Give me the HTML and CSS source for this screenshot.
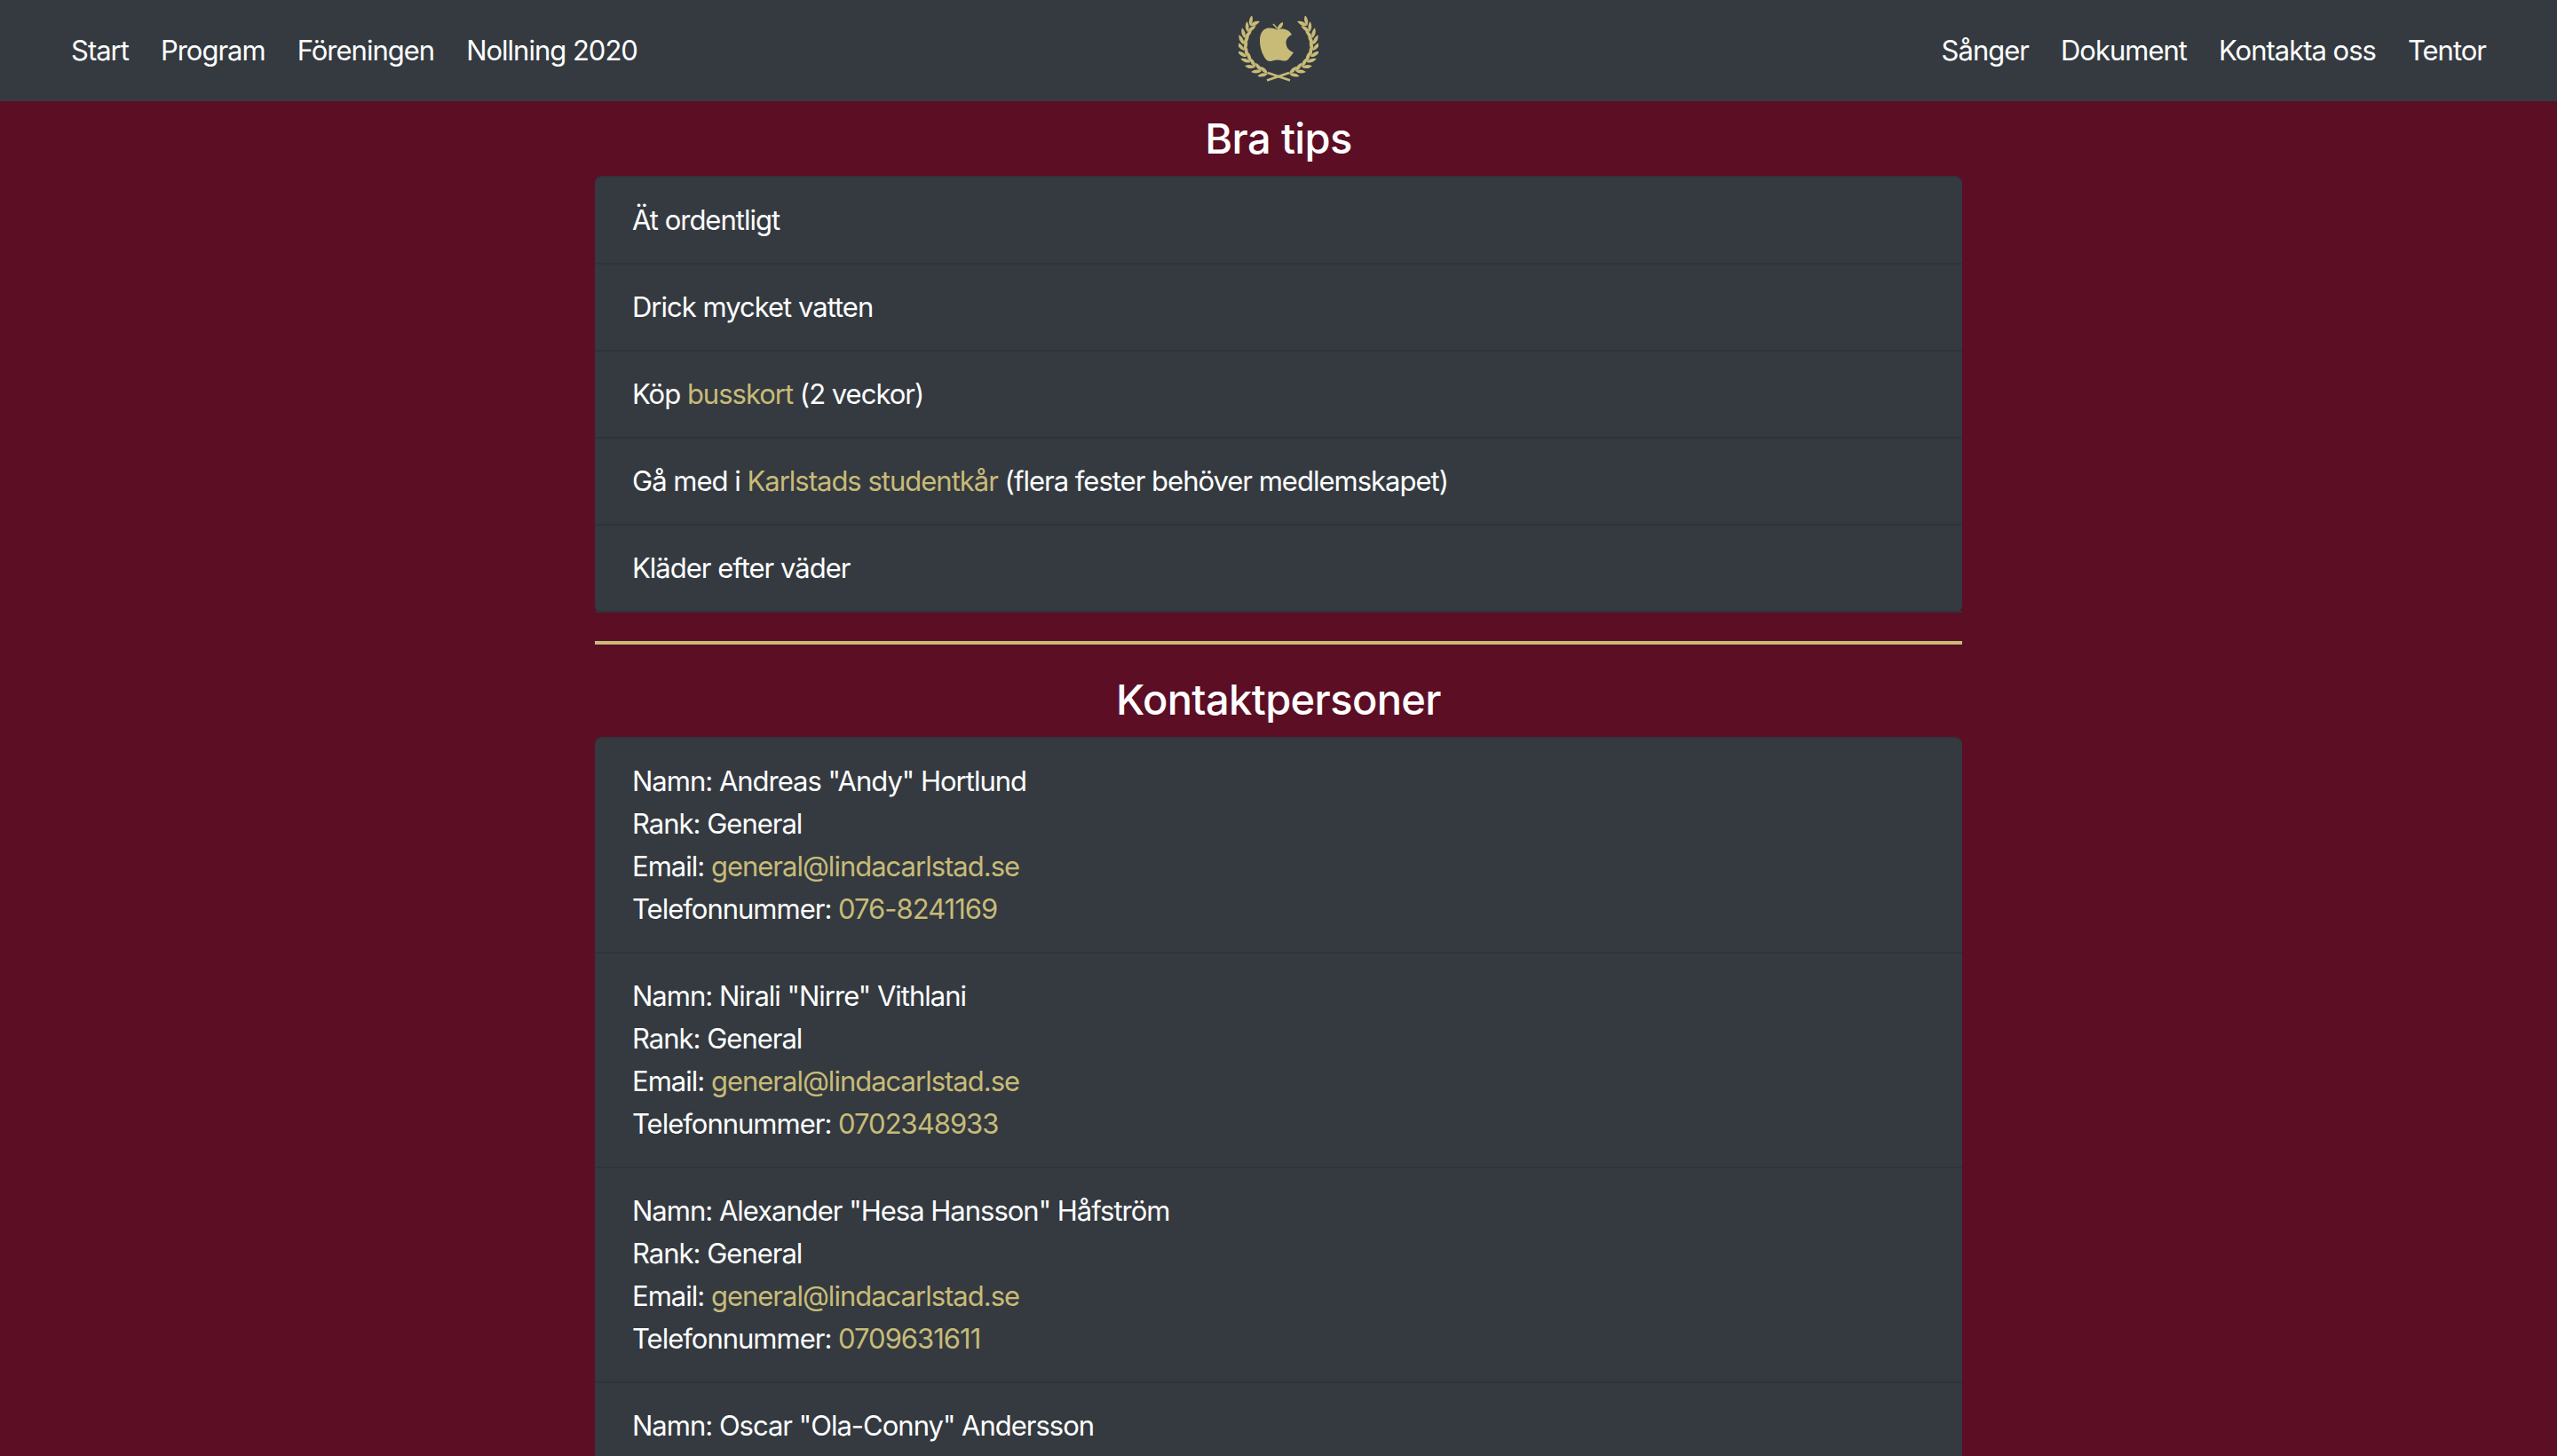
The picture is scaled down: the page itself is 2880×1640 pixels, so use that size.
FILE: index.html
```html
<!DOCTYPE html>
<html lang="sv">
<head>
    <meta charset="utf-8">
    <title>Nollning 2020</title>
    <link rel="stylesheet" href="styles.css">
</head>
<body>

<nav class="navbar">
    <div class="nav-links">
        <a href="#">Start</a>
        <a href="#">Program</a>
        <a href="#">Föreningen</a>
        <a href="#">Nollning 2020</a>
    </div>
    <a href="#" class="logo" aria-label="Logo">
        <svg width="90" height="76" viewBox="0 0 90 76">
            <defs>
                <path id="leaf" d="M0 0 Q5 -4.6 12 -1 Q6 3.4 0 0 Z"/>
                <g id="branch">
                    <use href="#leaf" transform="translate(33 65) rotate(172)"/>
                    <use href="#leaf" transform="translate(33 65) rotate(228)"/>
                    <use href="#leaf" transform="translate(26 62) rotate(180)"/>
                    <use href="#leaf" transform="translate(26 62) rotate(236)"/>
                    <use href="#leaf" transform="translate(19 57.5) rotate(190)"/>
                    <use href="#leaf" transform="translate(19 57.5) rotate(246)"/>
                    <use href="#leaf" transform="translate(13.5 52) rotate(204)"/>
                    <use href="#leaf" transform="translate(13.5 52) rotate(260)"/>
                    <use href="#leaf" transform="translate(9 46) rotate(217)"/>
                    <use href="#leaf" transform="translate(9 46) rotate(273)"/>
                    <use href="#leaf" transform="translate(6.5 39) rotate(234)"/>
                    <use href="#leaf" transform="translate(6.5 39) rotate(290)"/>
                    <use href="#leaf" transform="translate(6 32) rotate(247)"/>
                    <use href="#leaf" transform="translate(6 32) rotate(303)"/>
                    <use href="#leaf" transform="translate(7 25) rotate(260)"/>
                    <use href="#leaf" transform="translate(7 25) rotate(316)"/>
                    <use href="#leaf" transform="translate(10 18) rotate(272)"/>
                    <use href="#leaf" transform="translate(10 18) rotate(328)"/>
                    <use href="#leaf" transform="translate(13 11) rotate(284)"/>
                    <use href="#leaf" transform="translate(13 11) rotate(340)"/>
                    <path d="M33 64 L58 72.5" class="stem"/>
                </g>
            </defs>
            <use href="#branch"/>
            <use href="#branch" transform="translate(90 0) scale(-1 1)"/>
            <path d="M44 15.5 C38 13 32 12.5 28.5 15.5 C25 18.5 24 23 24 28 C24 36 27 44 31 49 C33 51.3 36 51.3 39 50.2 C42 49.2 46 49.2 49 50.2 C53 51.3 55.5 50 57 47.5 C58.5 45.5 60.5 43.5 62 41 C56.5 39 53.5 35 53.5 30 C53.5 26 56 23 60 21 C57 15.5 50 13.2 44 15.5 Z"/>
            <path d="M43.5 16 C44 11 46 8.5 50 7 C50.5 11 48 14.5 43.5 16 Z"/>
            <path d="M39 9 L43.5 14" class="twig"/>
        </svg>
    </a>
    <div class="nav-links nav-right">
        <a href="#">Sånger</a>
        <a href="#">Dokument</a>
        <a href="#">Kontakta oss</a>
        <a href="#">Tentor</a>
    </div>
</nav>

<main class="container">
    <h3>Bra tips</h3>
    <ul class="list">
        <li>Ät ordentligt</li>
        <li>Drick mycket vatten</li>
        <li>Köp <a href="#">busskort</a> (2 veckor)</li>
        <li>Gå med i <a href="#">Karlstads studentkår</a> (flera fester behöver medlemskapet)</li>
        <li>Kläder efter väder</li>
    </ul>

    <hr>

    <h3>Kontaktpersoner</h3>
    <ul class="list">
        <li>
            Namn: Andreas "Andy" Hortlund<br>
            Rank: General<br>
            Email: <a href="#">general@lindacarlstad.se</a><br>
            Telefonnummer: <a href="#">076-8241169</a>
        </li>
        <li>
            Namn: Nirali "Nirre" Vithlani<br>
            Rank: General<br>
            Email: <a href="#">general@lindacarlstad.se</a><br>
            Telefonnummer: <a href="#">0702348933</a>
        </li>
        <li>
            Namn: Alexander "Hesa Hansson" Håfström<br>
            Rank: General<br>
            Email: <a href="#">general@lindacarlstad.se</a><br>
            Telefonnummer: <a href="#">0709631611</a>
        </li>
        <li>
            Namn: Oscar "Ola-Conny" Andersson
        </li>
    </ul>
</main>

</body>
</html>
```

FILE: styles.css
```css
html, body {
    height: 100%;
    overflow: hidden;
}

body {
    margin: 0;
    background-color: #5c0e25;
    color: #fff;
    font-family: Inter, "Liberation Sans", sans-serif;
    font-size: 31px;
    letter-spacing: -1px;
    line-height: 48px;
}

a {
    color: #c8bb78;
    text-decoration: none;
}

.navbar {
    display: grid;
    grid-template-columns: 1fr auto 1fr;
    align-items: center;
    height: 114px;
    padding: 0 80px;
    background-color: #343a40;
}

.nav-links {
    display: flex;
    gap: 36px;
}

.nav-right {
    justify-content: flex-end;
}

.nav-links a {
    color: #fff;
}

.logo {
    display: flex;
    margin-bottom: 2px;
}

.logo svg {
    fill: #c8bb78;
}

.stem, .twig {
    fill: none;
    stroke: #c8bb78;
    stroke-width: 2.4;
}

.twig {
    stroke-width: 1.5;
}

.container {
    width: 1540px;
    margin: 0 auto;
}

h3 {
    margin: 0;
    padding-top: 6px;
    height: 84px;
    box-sizing: border-box;
    font-size: 47px;
    font-weight: 500;
    letter-spacing: -0.6px;
    line-height: 72px;
    text-align: center;
}

.list {
    margin: 0;
    padding: 0;
    list-style: none;
    background-color: #343a40;
    border-top: 2px solid #2f343a;
    border-radius: 8px;
}

.list li {
    padding: 24px 42px;
    border-bottom: 2px solid #2f343a;
}

hr {
    height: 4px;
    margin: 32px 0 20px;
    border: 0;
    background-color: #c8bb78;
}
```
